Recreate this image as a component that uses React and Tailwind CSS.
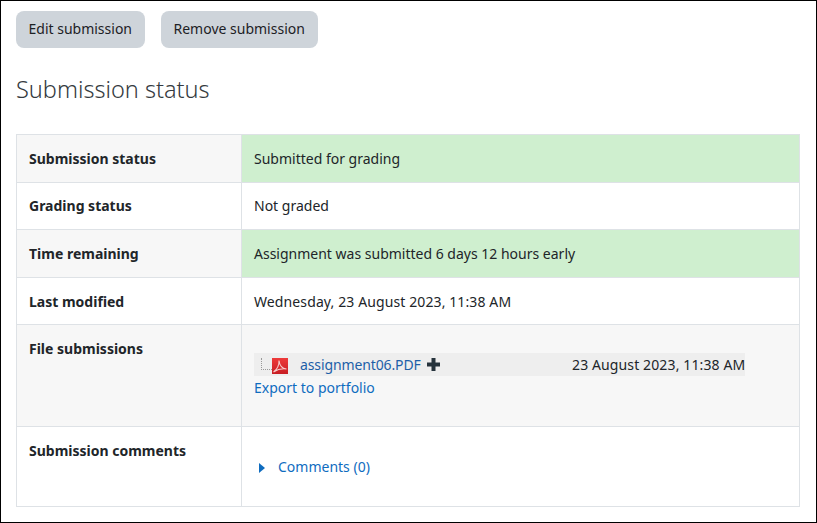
const rows = [
  { label: "Submission status", value: "Submitted for grading", tone: "bg-[#cfefcf]" },
  { label: "Grading status", value: "Not graded" },
  { label: "Time remaining", value: "Assignment was submitted 6 days 12 hours early", tone: "bg-[#cfefcf]" },
  { label: "Last modified", value: "Wednesday, 23 August 2023, 11:38 AM", tone: "tracking-[0.11px]" },
];

function PdfIcon() {
  return (
    <svg width="16" height="16" viewBox="0 0 16 16" className="mt-[3px] shrink-0">
      <defs>
        <linearGradient id="pdfRed" x1="0" y1="0" x2="0" y2="1">
          <stop offset="0" stopColor="#ee3a3a" />
          <stop offset="1" stopColor="#c81e24" />
        </linearGradient>
      </defs>
      <rect width="16" height="16" fill="url(#pdfRed)" />
      <path d="M1.5 14C5 11.5 7.2 7 7 2.5c.5 4.5 3 8 7.5 8.5-4.5-.6-9 .4-13 3z" fill="none" stroke="#f7c9c9" strokeWidth="1.1" />
    </svg>
  );
}

function FileSubmissions() {
  return (
    <div className="pt-[28px]">
      <div className="flex h-[23px] w-[491px] items-center bg-[#eeeeee]">
        <div className="mb-[1px] ml-[7px] h-[12px] w-[11px] border-b border-l border-dotted border-[#999999]" />
        <PdfIcon />
        <a className="ml-[12px] tracking-[-0.12px] text-[#1d5fa8]">assignment06.PDF</a>
        <svg width="13" height="13" viewBox="0 0 13 13" className="ml-[6px]">
          <path d="M4.5 0h4v4.5H13v4H8.5V13h-4V8.5H0v-4h4.5z" fill="#26333c" />
        </svg>
        <span className="ml-auto w-[173px] tracking-[0.12px] whitespace-nowrap text-[#212529]">23 August 2023, 11:38 AM</span>
      </div>
      <a className="mt-[1px] block text-[#0f6cbf]">Export to portfolio</a>
    </div>
  );
}

function Comments() {
  return (
    <div className="flex items-center pt-[29px]">
      <svg width="6" height="10" viewBox="0 0 6 10" className="ml-[5px] mr-[13px]">
        <path d="M0 0l6 5-6 5z" fill="#0f6cbf" />
      </svg>
      <a className="text-[#0f6cbf]">Comments (0)</a>
    </div>
  );
}

export default function App() {
  return (
    <div className="box-border h-[523px] w-[817px] overflow-hidden border border-black bg-white px-[15px] pt-[10px] text-[14px] leading-[22.5px] text-[#212529] [font-family:'Noto_Sans',sans-serif]">
      <div className="flex gap-[16px]">
        <button className="h-[37px] rounded-[8px] bg-[#ced4da] px-[12.5px] text-[#1d2125]">Edit submission</button>
        <button className="h-[37px] rounded-[8px] bg-[#ced4da] px-[13px] text-[#1d2125]">Remove submission</button>
      </div>
      <h2 className="mt-[25px] text-[23.5px] leading-[32px] font-light text-[#343a40]">Submission status</h2>
      <table className="mt-[29px] w-[784px] table-fixed border-collapse">
        <colgroup>
          <col className="w-[225px]" />
          <col />
        </colgroup>
        <tbody>
          {rows.map((row, i) => (
            <tr key={row.label} className={i % 2 === 0 ? "bg-[#f7f7f7]" : ""}>
              <th className="h-[47.6px] border border-[#dee2e6] px-[12px] pt-[1.5px] text-left font-bold">{row.label}</th>
              <td className={`border border-[#dee2e6] px-[12px] pt-[1.5px] ${row.tone || ""}`}>{row.value}</td>
            </tr>
          ))}
          <tr className="bg-[#f7f7f7]">
            <th className="h-[102px] border border-[#dee2e6] px-[12px] pt-[13px] text-left align-top font-bold">File submissions</th>
            <td className="border border-[#dee2e6] px-[12px] align-top"><FileSubmissions /></td>
          </tr>
          <tr>
            <th className="h-[80px] border border-[#dee2e6] px-[12px] pt-[13px] text-left align-top font-bold">Submission comments</th>
            <td className="border border-[#dee2e6] px-[12px] align-top"><Comments /></td>
          </tr>
        </tbody>
      </table>
    </div>
  );
}
